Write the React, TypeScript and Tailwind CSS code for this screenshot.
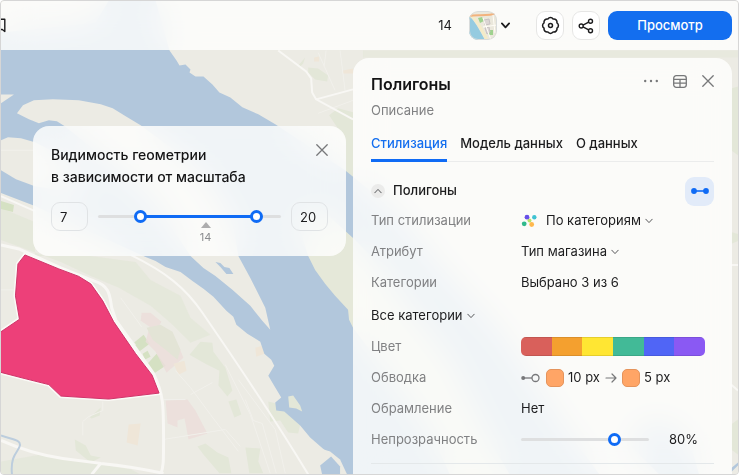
import { useState } from 'react'
import { clsx } from 'clsx'

const tabs = ['Стилизация', 'Модель данных', 'О данных']

const palette = [
  { name: 'red', className: 'bg-[#d9605b]' },
  { name: 'orange', className: 'bg-[#f4a02f]' },
  { name: 'yellow', className: 'bg-[#ffe633]' },
  { name: 'green', className: 'bg-[#42ba97]' },
  { name: 'blue', className: 'bg-[#5065f6]' },
  { name: 'violet', className: 'bg-[#8a59f3]' },
]

const MIN_ZOOM = 3
const MAX_ZOOM = 22

const thumb =
  '[&::-webkit-slider-thumb]:appearance-none [&::-webkit-slider-thumb]:pointer-events-auto [&::-webkit-slider-thumb]:size-[13px] [&::-webkit-slider-thumb]:rounded-full [&::-webkit-slider-thumb]:border-3 [&::-webkit-slider-thumb]:border-[#0f6bf5] [&::-webkit-slider-thumb]:bg-white'

function Chevron({ className }: { className?: string }) {
  return (
    <svg viewBox="0 0 8 6" className={clsx('h-[6px] w-[8px] shrink-0', className)} fill="none" stroke="currentColor" strokeLinecap="round" strokeLinejoin="round">
      <path d="M.8 1.2 4 4.6 7.200 1.2" />
    </svg>
  )
}

function CloseIcon() {
  return (
    <svg viewBox="0 0 12 12" className="size-3" fill="none" stroke="currentColor" strokeWidth="1.3" strokeLinecap="round">
      <path d="M.8.8 11.2 11.2M11.2.8.8 11.2" />
    </svg>
  )
}

function MapCanvas() {
  return (
    <svg viewBox="0 0 739 475" preserveAspectRatio="xMidYMid slice" className="absolute inset-0 size-full" aria-hidden="true">
      <rect width="739" height="475" fill="#ecebe4" />

      {/* greenery */}
      <g fill="#e3e7d8">
        <path d="M0 208 34 222 34 256 90 256 135 262 150 280 180 296 190 318 210 335 190 343 172 325 150 306 118 288 90 276 60 262 0 240Z" opacity=".75" />
        <path d="M308 67 318 68 328 75 327 81 315 79 308 72Z" />
        <path d="M299 64 305 57 303 63 299 67Z" />
        <path d="M329 115 338 108 353 112V238L346 170V140L335 124Z" />
        <path d="M363 50H739V57H363Z" opacity=".5" />
        <path d="M189 355 200 342 212 343 213 352 225 368 232 391 227 397 218 386 219 371 205 364Z" />
        <path d="M228 402 236 400 241 415 234 418Z" />
        <path d="M197 447 205 444 217 453 228 458 231 474H219L203 455Z" />
        <path d="M245 448 260 449 258 462 263 474H249Z" />
        <path d="M268 402 280 405 300 425 298 434 288 433 280 421 270 422Z" />
        <path d="M89 418 100 408 99 416 91 419Z" />
        <path d="M74 440 85 446 90 456 100 458 90 463 75 451Z" />
        <path d="M0 462 40 455 80 462 130 470 140 475H0Z" opacity=".7" />
        <path d="M732 88 739 86V155L732 150ZM732 232 739 234V241L732 244ZM732 425 739 420V455L732 450Z" />
      </g>
      <g fill="#d5e1c3">
        <path d="M0 201 13 205 12 212 0 209Z" />
        <path d="M132 344 143 335 149 344 137 353ZM142 354 147 351 150 357 144 360ZM146 365 156 354 165 366 153 374Z" />
      </g>
      <g fill="#ecdedb" opacity=".8">
        <path d="M141 313 150 313 161 322 157 328 178 346 183 358 166 373 155 352 145 342 149 327 140 321Z" />
        <path d="M165 401 187 400 195 411 207 434 188 440 184 419 177 421 177 428 167 424Z" />
      </g>
      <path d="M146 328 160 325 172 332 180 350 177 360 165 350 152 340Z" fill="#e3e4d6" />
      <g fill="#efe6d8">
        <path d="M128 425 140 424 137 446 126 443ZM255 348 262 346 264 354 256 357ZM343 70 353 68V73H343Z" />
        <path d="M173 364 184 361 186 371 178 375ZM314 57 319 56 319 61 314 61Z" />
      </g>

      {/* river and its arms */}
      <path
        fill="#b2c7dc"
        d="M0 32 60 26 95 22 108 0H155L169 50 176 60 179 65 185 64 190 69 189 72 195 76 203 76 212 84 219 92 230 97 242 107 258 114 275 124 345 170 400 215 440 265 500 330 560 420 600 475H340L325 451 310 438 300 426 284 412 276 411 275 403 281 398 275 388 268 376 274 366 271 360 264 354 260 342 247 334 236 325 233 317 226 311 213 297 203 289 192 281 180 272 165 267 155 261 145 257 90 232 34 206 0 193Z"
      />
      <g fill="#ecebe4">
        <path d="M0 94H13L0 103Z" />
        <path d="M16 113 22 105 33 100 52 99 78 100 100 104 112 108 125 116 140 125 200 170 232 220 238 256 250 278 265 308 270 330 262 321 250 306 232 290 215 276 203 268 190 256 150 195 64 126 56 121 48 120 38 123 28 119Z" />
        <path d="M0 140 7 137 20 138 34 142 60 155 90 195 34 186 15 179 0 170Z" />
        <path d="M288 397 293 396 300 406 302 412 296 409 289 408Z" fill="#e3e7d8" />
        <path d="M353 238 322 210 296 218 308 256 315 270 325 284 335 296 348 310 349 320 353 328 385 370 430 430 450 475H510L490 440 450 360 410 310 380 265Z" fill="#e5e8d9" />
        <path d="M308 445 330 452 340 460 347 475H308Z" />
      </g>
      <g fill="#b2c7dc">
        <path d="M215 262 220 263 224 267 229 268 233 274 226 274 220 267Z" />
        <path d="M320 466 331 457 340 467V475H322Z" />
        <path d="M640 425 665 420 690 440 700 475H660L630 445ZM732 469 739 463V466L732 473Z" />
      </g>

      {/* streets */}
      <g fill="none" stroke="#f1f0eb" strokeWidth="1">
        <path d="M318 52 335 90M340 50 345 90M326 50 324 66M318 113 353 100M0 290H14M113 318 135 345M120 298 141 327M175 371 190 388 210 415 238 452M190 395 212 383M163 400H185M163 440 225 430 240 447M225 365 250 415 270 474M238 380 275 430 285 474M245 400 253 421 262 424 276 474M82 436V422L88 417 102 411V402M0 150H33" />
      </g>
      <g fill="none" stroke="#f8f7f4" strokeWidth="2">
        <path d="M0 196 34 211M130 255C165 272 185 288 202 313S262 399 308 475" />
        <path d="M278 50 306 71 311 78 312 92 316 99 353 119M316 99 353 89M732 265H739M732 385 739 391" />
        <path d="M0 245 18 249 60 268 93 281C110 286 109 297 111 308L115 320 153 374C163 395 163 405 163 440 163 462 163 468 160 475" strokeWidth="3" />
        <path d="M0 441C20 450 38 456 62 459L100 464C130 467 145 470 163 474M100 464 91 475" strokeWidth="3" />
      </g>
      <path d="M0 436C10 440 20 440 19 446S9 455 11 475" fill="none" stroke="#bccddd" strokeWidth="2" />

      <path
        d="M-3 334 18.500 319.500 14.500 296 17 264 24 255 58 269 78 276.500 90 284 102 301 113 322 135 354 151.500 375.500 158.500 393.500 108 399.500 60 396.500 48 385 24 379 -3 372Z"
        fill="#ed4079"
        stroke="#fbfaf7"
        strokeWidth="4"
        paintOrder="stroke"
      />
      <path
        d="M-3 334 18.500 319.500 14.500 296 17 264 24 255 58 269 78 276.500 90 284 102 301 113 322 135 354 151.500 375.500 158.500 393.500 108 399.500 60 396.500 48 385 24 379 -3 372Z"
        fill="none"
        stroke="#cf3469"
        strokeWidth="1"
      />
    </svg>
  )
}

function Header() {
  const iconButton = 'flex h-[29px] w-[28px] items-center justify-center rounded-[9px] border border-[#e6e6e5] bg-white text-[#1c1c1e]'

  return (
    <header className="flex h-[49px] shrink-0 items-center bg-[#fffffe]/80 pr-[6px] backdrop-blur-lg">
      <button type="button" aria-label="Закладки" className="text-[#1c1c1e]">
        <svg viewBox="0 0 5 15" className="h-[15px] w-[5px]" fill="none" stroke="currentColor" strokeWidth="1.400" strokeLinejoin="round">
          <path d="M-1 1.200H3.800V13.500L1.300 11.500H-1" />
        </svg>
      </button>
      <span className="mr-[17px] ml-auto text-[13px] text-[#1c1c1e]">14</span>
      <button type="button" aria-label="Подложка карты" className="mr-[26px] flex items-center gap-1 text-[#1c1c1e]">
        <svg viewBox="0 0 28 29" className="h-[29px] w-[28px] rounded-[9px]" fill="none">
          <rect width="28" height="29" fill="#ebe8dc" />
          <path d="M0 5C6 10 10 18 16 29H0Z" fill="#95cbe0" />
          <path d="M2 4C9 10 12 18 18 29" stroke="#f4ebc8" strokeWidth="3" />
          <path d="M9 7 13 6 15 10 11 12ZM20 19H24V24H20Z" fill="#9fd28f" />
          <path d="M15 9 20 8 21 13 16 14ZM16 17 20 16 21 21 18 23Z" fill="#dcd6d4" stroke="#c8c2c3" />
          <path d="M0 5C8 3 18 6 28 2" stroke="#f2b27d" strokeWidth="2" />
          <path d="M14 7 22 29M14 16 28 14M24 4 26 22" stroke="#fffdf7" />
          <rect x=".5" y=".5" width="27" height="28" rx="8.500" stroke="#d9dcdc" />
        </svg>
        <Chevron className="h-[7px] w-[9px] stroke-[1.600]" />
      </button>
      <div className="flex items-center gap-2">
        <button type="button" aria-label="Настройки" className={iconButton}>
          <svg viewBox="0 0 24 24" className="size-[19px] shrink-0" fill="none" stroke="currentColor" strokeWidth="1.900" strokeLinejoin="round">
            <path d="M3.850 8.620a4 4 0 0 1 4.780-4.770 4 4 0 0 1 6.740 0 4 4 0 0 1 4.780 4.780 4 4 0 0 1 0 6.740 4 4 0 0 1-4.770 4.780 4 4 0 0 1-6.750 0 4 4 0 0 1-4.780-4.770 4 4 0 0 1 0-6.760Z" />
            <circle cx="12" cy="12" r="2.500" />
          </svg>
        </button>
        <button type="button" aria-label="Поделиться" className={iconButton}>
          <svg viewBox="0 0 16 16" className="size-4 shrink-0" fill="none" stroke="currentColor" strokeWidth="1.400">
            <circle cx="3.200" cy="8" r="2" />
            <circle cx="12.500" cy="3.200" r="2" />
            <circle cx="12.500" cy="12.800" r="2" />
            <path d="M5 7.100 10.700 4.100M5 8.900 10.700 11.900" />
          </svg>
        </button>
        <button type="button" className="h-[29px] w-[124px] rounded-[9px] bg-[#136eef] text-[13px] font-medium text-white">
          Просмотр
        </button>
      </div>
    </header>
  )
}

function ZoomRangeCard() {
  const [from, setFrom] = useState(7)
  const [to, setTo] = useState(20)
  const span = MAX_ZOOM - MIN_ZOOM
  const input = 'h-[29px] w-[37px] rounded-[9px] border border-[#e0e3e5] bg-transparent pl-2 text-[13px] text-[#1c1c1e] outline-none'
  const range = 'pointer-events-none absolute inset-x-0 top-2 h-[13px] w-full appearance-none bg-transparent'

  return (
    <section className="mt-[76px] ml-8 w-[313px] shrink-0 rounded-[16px] bg-[#fffffe]/80 px-[18px] pb-[11px] backdrop-blur-lg">
      <div className="flex items-start justify-between pt-[18px]">
        <h2 className="text-[14px] leading-[22px] font-medium text-[#141415]">
          Видимость геометрии
          <br />в зависимости от масштаба
        </h2>
        <button type="button" aria-label="Закрыть" className="text-[#77787a]">
          <CloseIcon />
        </button>
      </div>
      <div className="mt-[14px] flex gap-[10px]">
        <input aria-label="Минимальный масштаб" className={input} value={from} onChange={(e) => setFrom(Number(e.target.value) || 0)} />
        <div className="relative h-[43px] flex-1 pt-[13px]">
          <div className="h-[3px] rounded-full bg-[#dedfe0]">
            <div
              className="h-full bg-[#0f6bf5]"
              style={{ marginLeft: `${((from - MIN_ZOOM) / span) * 100}%`, width: `${((to - from) / span) * 100}%` }}
            />
          </div>
          <input type="range" aria-label="От" min={MIN_ZOOM} max={MAX_ZOOM} value={from} onChange={(e) => setFrom(Number(e.target.value))} className={clsx(range, thumb)} />
          <input type="range" aria-label="До" min={MIN_ZOOM} max={MAX_ZOOM} value={to} onChange={(e) => setTo(Number(e.target.value))} className={clsx(range, thumb)} />
          <div className="ml-[101px] flex w-[13px] flex-col items-center pt-1 text-[11px] leading-[14px] text-[#8b8d90]">
            <svg viewBox="0 0 10 6" className="h-[6px] w-[10px]" fill="#adadae">
              <path d="M5 0 10 6H0Z" />
            </svg>
            <span className="pt-[2px]">14</span>
          </div>
        </div>
        <input aria-label="Максимальный масштаб" className={input} value={to} onChange={(e) => setTo(Number(e.target.value) || 0)} />
      </div>
    </section>
  )
}

function Row({ label, htmlFor, children }: { label: string; htmlFor?: string; children: React.ReactNode }) {
  return (
    <div className="flex h-[31px] items-center">
      {htmlFor ? (
        <label htmlFor={htmlFor} className="w-[150px] shrink-0 text-[#808183]">{label}</label>
      ) : (
        <span className="w-[150px] shrink-0 text-[#808183]">{label}</span>
      )}
      {children}
    </div>
  )
}

function Select({ id, label, options }: { id: string; label?: string; options: string[] }) {
  return (
    <span className="flex items-center gap-1">
      <select id={id} aria-label={label} className="[field-sizing:content] appearance-none bg-transparent text-[#1c1c1e] outline-none">
        {options.map((option) => (
          <option key={option}>{option}</option>
        ))}
      </select>
      <Chevron className="text-[#56575a]" />
    </span>
  )
}

function LayerPanel() {
  const [active, setActive] = useState(tabs[0])
  const [opacity, setOpacity] = useState(80)

  return (
    <aside className="mt-2 mr-[6px] ml-auto w-[379px] shrink-0 rounded-t-[16px] bg-[#fffffe]/80 px-[18px] text-[13px] backdrop-blur-lg">
      <div className="flex items-start justify-between pt-[14px]">
        <h1 className="text-[16px] leading-6 font-semibold text-[#141415]">Полигоны</h1>
        <div className="flex h-[18px] items-center gap-[15px] text-[#77787a]">
          <button type="button" aria-label="Ещё">
            <svg viewBox="0 0 14 4" className="h-1 w-[14px]" fill="currentColor">
              <circle cx="1.200" cy="2" r="1.200" />
              <circle cx="7" cy="2" r="1.200" />
              <circle cx="12.800" cy="2" r="1.200" />
            </svg>
          </button>
          <button type="button" aria-label="Таблица">
            <svg viewBox="0 0 14 13" className="h-[13px] w-[14px]" fill="none" stroke="currentColor" strokeWidth="1.300">
              <rect x=".7" y=".7" width="12.600" height="11.600" rx="2.500" />
              <path d="M.7 4.300H13.300M.7 8.200H13.300M7 4.300V12.300" />
            </svg>
          </button>
          <button type="button" aria-label="Закрыть панель">
            <CloseIcon />
          </button>
        </div>
      </div>
      <p className="mt-1 leading-5 text-[#808183]">Описание</p>

      <div role="tablist" className="mt-3 flex h-[30px] gap-[13px] border-b border-[#ebecec]">
        {tabs.map((tab) => (
          <button
            key={tab}
            type="button"
            role="tab"
            aria-selected={tab === active}
            onClick={() => setActive(tab)}
            className={clsx(
              '-mb-px border-b-3 pb-[3px] font-medium',
              tab === active ? 'border-[#0f6bf5] text-[#136eef]' : 'border-transparent text-[#1c1c1e]'
            )}
          >
            {tab}
          </button>
        ))}
      </div>

      <div className="mt-[15px] flex h-[28px] items-center justify-between">
        <button type="button" className="flex items-center gap-2 font-medium text-[#1c1c1e]">
          <span className="flex size-[14px] items-center justify-center rounded-full bg-[#ebebea] text-[#56575a]">
            <Chevron className="rotate-180" />
          </span>
          Полигоны
        </button>
        <button type="button" aria-label="Связать с масштабом" className="flex size-[29px] items-center justify-center rounded-[9px] bg-[#e2ebf9]">
          <svg viewBox="0 0 18 6" className="h-[6px] w-[18px]" fill="#0f6bf5">
            <circle cx="3" cy="3" r="2.900" />
            <circle cx="15" cy="3" r="2.900" />
            <path d="M3 2.200H15V3.800H3Z" />
          </svg>
        </button>
      </div>

      <Row label="Тип стилизации" htmlFor="style-type">
        <svg viewBox="0 0 16 14" className="mr-[9px] h-[14px] w-4">
          <circle cx="8.500" cy="6.500" r="2" fill="#b7e36a" />
          <circle cx="6" cy="3.200" r="2.400" fill="#6750e8" />
          <circle cx="13.300" cy="3.200" r="2.200" fill="#3fc3d2" />
          <circle cx="3.200" cy="9.800" r="2.400" fill="#2fb98c" />
          <circle cx="10.700" cy="10.500" r="2.400" fill="#ffb84d" />
        </svg>
        <Select id="style-type" options={['По категориям']} />
      </Row>
      <Row label="Атрибут" htmlFor="attribute">
        <Select id="attribute" options={['Тип магазина']} />
      </Row>
      <Row label="Категории">
        <span className="text-[#1c1c1e]">Выбрано 3 из 6</span>
      </Row>

      <div className="mt-[2px] flex h-[31px] items-center">
        <Select id="category" label="Категория" options={['Все категории']} />
      </div>
      <Row label="Цвет">
        <div className="flex h-[19px] w-[184px] overflow-hidden rounded-[5px]">
          {palette.map((color) => (
            <span key={color.name} className={clsx('flex-1 border-y border-black/10', color.className)} />
          ))}
        </div>
      </Row>
      <Row label="Обводка">
        <div className="flex items-center text-[#1c1c1e]">
          <svg viewBox="0 0 19 10" className="mr-[6px] h-[10px] w-[19px]" fill="none" stroke="#77787a" strokeWidth="1.300">
            <circle cx="2.200" cy="5" r="2" fill="#77787a" stroke="none" />
            <path d="M3 5H11" />
            <circle cx="14.500" cy="5" r="3.500" />
          </svg>
          <button type="button" aria-label="Начальный цвет" className="mr-1 size-[18px] rounded-[5px] border border-[#e5945c] bg-[#ffa566]" />
          10 px
          <svg viewBox="0 0 12 10" className="mx-[5px] h-[10px] w-3" fill="none" stroke="#77787a" strokeWidth="1.200" strokeLinecap="round" strokeLinejoin="round">
            <path d="M1 5H11M7 1 11 5 7 9" />
          </svg>
          <button type="button" aria-label="Конечный цвет" className="mr-1 size-[18px] rounded-[5px] border border-[#e5945c] bg-[#ffa566]" />
          5 px
        </div>
      </Row>
      <Row label="Обрамление">
        <span className="text-[#1c1c1e]">Нет</span>
      </Row>
      <Row label="Непрозрачность" htmlFor="opacity">
        <input
          id="opacity"
          type="range"
          min={10}
          max={103}
          value={opacity}
          onChange={(e) => setOpacity(Number(e.target.value))}
          className={clsx(
            'h-[3px] w-[128px] appearance-none rounded-full bg-[#dedfe0]',
            thumb
          )}
        />
        <span className="ml-5 text-[#1c1c1e]">{opacity}%</span>
      </Row>
      <div className="mt-2 h-5 border-t border-[#e4e8ea]" />
    </aside>
  )
}

export default function App() {
  return (
    <div className="relative flex h-screen flex-col overflow-hidden rounded-[4px] border border-[#d6d6d6] bg-[#ecebe4] font-['Inter','Liberation_Sans',sans-serif]">
      <MapCanvas />
      <Header />
      <main className="flex min-h-0 flex-1 items-start">
        <ZoomRangeCard />
        <LayerPanel />
      </main>
    </div>
  )
}
